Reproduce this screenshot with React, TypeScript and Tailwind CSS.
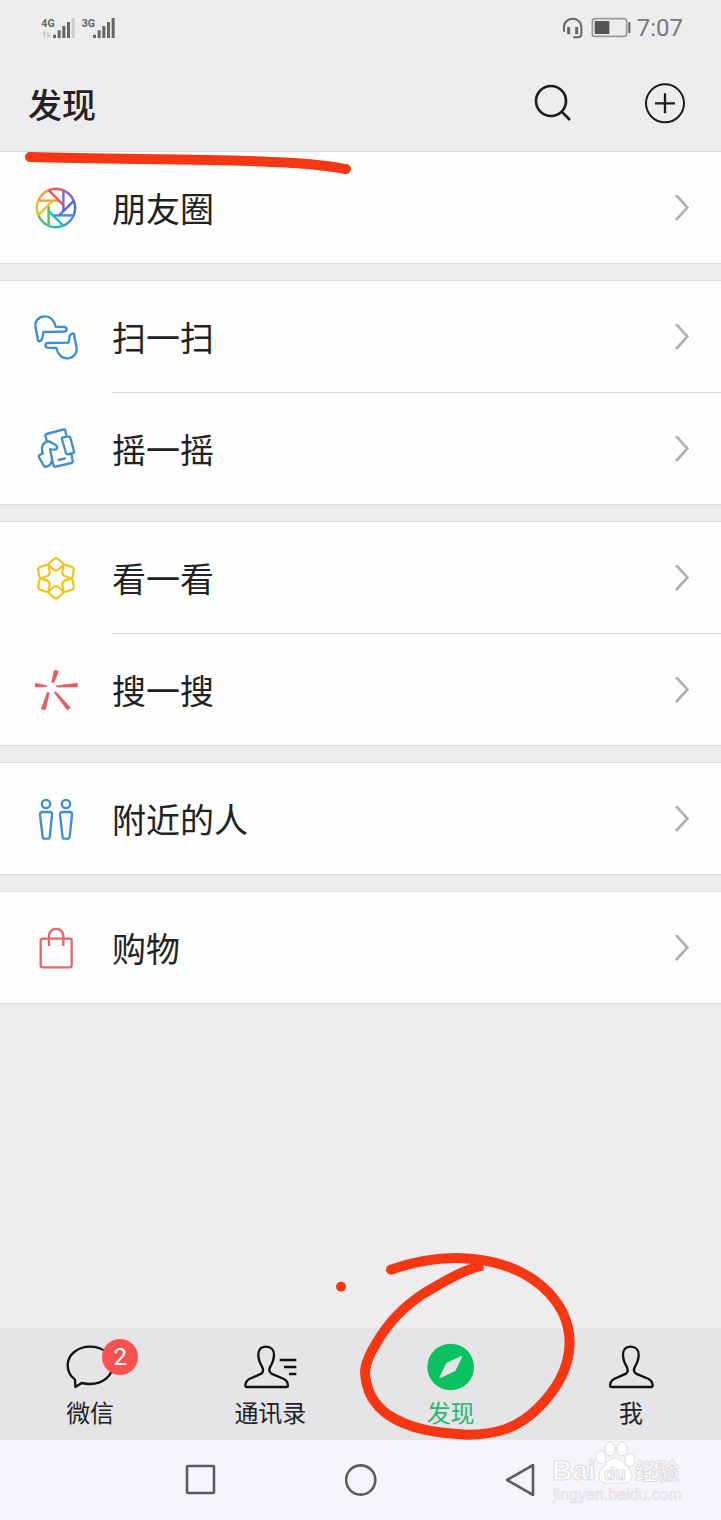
import type { ReactNode } from 'react'

type Item = { label: string; icon: ReactNode }

const BLADES = ['#f5a03c', '#e8584f', '#8a63d2', '#4a6fdc', '#3d8fdd', '#2fb9b5', '#4cc764', '#e3c52f']

function MomentsIcon() {
  return (
    <svg className="size-12 shrink-0" viewBox="-24 -24 48 48" fill="none" strokeWidth="2.4">
      {BLADES.map((color, i) => (
        <g key={color} stroke={color} transform={`rotate(${i * 45})`}>
          <path d="M-17.6 -7.4 H3.2" />
          <path d="M-17.6 -7.4 A19.1 19.1 0 0 1 -7 -17.8" />
        </g>
      ))}
    </svg>
  )
}

function ScanIcon() {
  const hand =
    'M57 123 Q52 123 53 112 L47 85 C42 60 58 48 75 48 C92 48 102 60 107 79 L133 80 Q140 81 140 87 Q140 94 132 94 L70 95 L67 114 Q65 122 57 123 Z'
  return (
    <svg className="size-12 shrink-0" viewBox="36 38 144 144" fill="none" stroke="#3e8ed0" strokeWidth="7" strokeLinejoin="round">
      <path d={hand} />
      <path d={hand} transform="rotate(180 108 111)" />
    </svg>
  )
}

function ShakeIcon() {
  return (
    <svg className="size-12 shrink-0" viewBox="36 374 144 144" fill="none" stroke="#3e8ed0" strokeWidth="7" strokeLinejoin="round" strokeLinecap="round">
      <path d="M80 421 L76 406 Q76 402 80 401 L131 387 Q135 386 136 390 L139 407" />
      <path d="M127 412 L146 408 Q150 408 151 412 L162 453 Q163 457 159 458 L143 462 Q139 462 138 458 L126 417 Q125 413 127 412 Z" />
      <path d="M68 459 C62 437 70 423 87 423 L108 435 Q114 441 110 446 Q102 450 90 446 L100 494 Q101 500 107 499 L154 488 Q159 486 158 481 L154 462" />
      <path d="M68 459 L59 464 Q55 467 57 471 L72 497 Q75 501 79 499 L88 495 Q95 490 96 478" />
      <path d="M116 479 L135 474" />
    </svg>
  )
}

function LookIcon() {
  return (
    <svg className="size-12 shrink-0" viewBox="-72 -73 144 144" fill="none" stroke="#f2c31b" strokeWidth="6.5" strokeLinejoin="round">
      {[0, 60, 120, 180, 240, 300].map((deg) => (
        <path
          key={deg}
          transform={`rotate(${deg})`}
          d="M-6 -58 Q0 -63 6 -58 L20 -46 Q24 -42 21 -38 L7 -26 Q0 -21 -7 -26 L-21 -38 Q-24 -42 -20 -46 Z"
        />
      ))}
    </svg>
  )
}

function SearchStarIcon() {
  return (
    <svg className="size-12 shrink-0" viewBox="36 378 144 144" fill="#e35d62" stroke="#e35d62" strokeWidth="2" strokeLinejoin="round">
      <path d="M103 391 L115 394 L103 426 L95 427 Z" />
      <path d="M46 430 L80 437 L80 440 L46 441 Z" />
      <path d="M110 437 L172 430 L172 441 L110 441 Z" />
      <path d="M82 457 L88 459 L76 510 L64 507 Z" />
      <path d="M103 458 L108 455 L151 503 L142 510 Z" />
    </svg>
  )
}

function NearbyIcon() {
  return (
    <svg className="size-12 shrink-0" viewBox="36 45 144 144" fill="none" stroke="#3e8ed0" strokeWidth="7" strokeLinejoin="round">
      {[0, 60].map((dx) => (
        <g key={dx} transform={`translate(${dx} 0)`}>
          <circle cx="78" cy="72" r="12.5" />
          <path d="M66 96 H91 Q97 97 96 104 L89 172 Q88 176 85 176 H71 Q68 176 68 172 L60 104 Q60 97 66 96 Z" />
        </g>
      ))}
    </svg>
  )
}

function BagIcon() {
  return (
    <svg className="size-12 shrink-0" viewBox="36 432 144 144" fill="none" stroke="#e06a6a" strokeWidth="7">
      <rect x="62" y="476" width="93" height="86" rx="6" />
      <path d="M87 498 V468 A21.5 21.5 0 0 1 130 468 V498" />
    </svg>
  )
}

const GROUPS: Item[][] = [
  [{ label: '朋友圈', icon: <MomentsIcon /> }],
  [
    { label: '扫一扫', icon: <ScanIcon /> },
    { label: '摇一摇', icon: <ShakeIcon /> },
  ],
  [
    { label: '看一看', icon: <LookIcon /> },
    { label: '搜一搜', icon: <SearchStarIcon /> },
  ],
  [{ label: '附近的人', icon: <NearbyIcon /> }],
  [{ label: '购物', icon: <BagIcon /> }],
]

function StatusBar() {
  return (
    <div className="flex h-14 items-center justify-between pr-[38px] pl-10">
      <svg className="h-6 w-20" viewBox="120 45 240 72" fill="#666">
        <text x="124" y="77" fontSize="32" fontWeight="700" fontFamily="Roboto, sans-serif">
          4G
        </text>
        <text x="245" y="77" fontSize="32" fontWeight="700" fontFamily="Roboto, sans-serif">
          3G
        </text>
        <path d="M134 109 V93 L127 99 M144 92 V108 L151 102" stroke="#c4c4c6" strokeWidth="4" fill="none" />
        <path d="M159 101h9v10h-9z M173 88h9v23h-9z M187 75h9v36h-9z M201 63h9v48h-9z" />
        <path d="M215 51h9v60h-9z" fill="#ccc" />
        <path d="M279 101h9v10h-9z M293 88h9v23h-9z M307 75h9v36h-9z M321 63h9v48h-9z M335 51h9v60h-9z" />
      </svg>
      <div className="flex items-center gap-px">
        <svg className="h-6 w-[74px]" viewBox="186 48 222 72" fill="none" stroke="#666">
          <path d="M192 95 V82 C192 48 244 48 244 82 V102 Q244 112 234 112 H220" strokeWidth="6" />
          <path d="M206 81 V103 M230 81 V103" strokeWidth="9" />
          <rect x="277" y="56" width="103" height="53" rx="8" strokeWidth="5" stroke="#999" />
          <rect x="284" y="63" width="44" height="39" fill="#555" stroke="none" />
          <path d="M388 66 V99" strokeWidth="6" />
        </svg>
        <span className="font-[Roboto,sans-serif] text-2xl text-[#777]">7:07</span>
      </div>
    </div>
  )
}

function Header() {
  return (
    <header className="relative border-b border-[#d4d3d6]">
      <StatusBar />
      <div className="flex h-[95px] items-center justify-between pr-8 pl-7">
        <h1 className="text-[34px] leading-10 font-medium">发现</h1>
        <div className="flex gap-16">
          <button type="button" aria-label="搜索">
            <svg className="size-12" viewBox="86 239 144 144" fill="none" stroke="#1c1c1e" strokeWidth="8">
              <circle cx="152" cy="302" r="45" />
              <path d="M184 334 L209 359" />
            </svg>
          </button>
          <button type="button" aria-label="添加">
            <svg className="size-12" viewBox="423 239 144 144" fill="none" stroke="#1c1c1e" strokeWidth="6">
              <circle cx="495" cy="309" r="57" />
              <path d="M465 309 H525 M495 279 V339" strokeWidth="7" />
            </svg>
          </button>
        </div>
      </div>
      {/* red pen underline */}
      <svg className="pointer-events-none absolute top-[144px] left-5 z-10 h-8 w-[340px]" viewBox="20 144 340 32" fill="none">
        <path d="M30 157 C110 159 190 159 250 161 S320 165 346 169" stroke="#f73713" strokeWidth="10" strokeLinecap="round" />
      </svg>
    </header>
  )
}

function Row({ item, divided }: { item: Item; divided: boolean }) {
  return (
    <li>
      {divided && <div className="ml-28 h-px bg-[#d9d9db]" />}
      <button type="button" className="flex h-[111px] w-full items-center gap-8 pr-8 pl-8 text-left">
        {item.icon}
        <span className="flex-1 text-[34px] leading-10">{item.label}</span>
        <svg className="h-[26px] w-[14px]" viewBox="0 0 14 26" fill="none" stroke="#b0b0b2" strokeWidth="2.6">
          <path d="M1 0 L12.5 12.5 L1 25" />
        </svg>
      </button>
    </li>
  )
}

const PERSON =
  'M120 80 C104 80 97 91 97 104 C97 118 101 128 108 140 C113 149 113 155 106 161 L70 177 C61 182 58 188 58 198 Q58 201 62 201 H182 Q186 201 186 198 C186 188 183 182 174 177 L136 161 C128 155 128 149 133 140 C140 128 144 118 144 104 C144 91 136 80 120 80 Z'

function Tab({ label, active, children }: { label: string; active?: boolean; children: ReactNode }) {
  return (
    <a href="#" className={`flex flex-1 flex-col items-center pt-[11px] ${active ? 'text-[#2bb673]' : 'text-[#222]'}`}>
      <span className="relative">{children}</span>
      <span className="text-2xl leading-[34px]">{label}</span>
    </a>
  )
}

function TabBar() {
  return (
    <nav className="flex h-28 bg-[#e5e4e6]">
      <Tab label="微信">
        <svg className="size-14" viewBox="96 57 168 168" fill="none" stroke="#111" strokeWidth="7" strokeLinejoin="round">
          <path d="M136 201 L135 179 C120 168 113 152 113 136 C113 104 143 80 180 80 C218 80 248 104 248 136 C248 168 218 192 180 192 C171 192 163 191 155 189 Z" />
        </svg>
        <span className="absolute top-0 left-10 flex size-9 items-center justify-center rounded-full bg-[#fa5151] font-[Roboto,sans-serif] text-2xl text-white">
          2
        </span>
      </Tab>
      <Tab label="通讯录">
        <svg className="size-14" viewBox="636 57 168 168" fill="none" stroke="#111" strokeWidth="7">
          <path d={PERSON} transform="translate(588 0)" />
          <path d="M749 120 H799 M762 141 H799 M777 162 H799" strokeWidth="8" />
        </svg>
      </Tab>
      <div className="relative flex flex-1">
        <Tab label="发现" active>
          <svg className="size-14" viewBox="308 297 168 168">
            <circle cx="391" cy="381" r="70" fill="#0ac15f" />
            <path d="M422 348 Q427 347 425 352 L405 393 L362 413 Q357 415 358 410 L378 369 Z" fill="#e5e4e6" />
          </svg>
        </Tab>
        {/* red pen circle around the tab */}
        <svg
          className="pointer-events-none absolute -top-22 -left-10 z-10 h-[210px] w-[270px] max-w-none"
          viewBox="3 0 810 630"
          fill="none"
          stroke="#f73713"
          strokeWidth="30"
        >
          <circle cx="63" cy="140" r="15" fill="#f73713" stroke="none" />
          <circle cx="213" cy="89" r="15" fill="#f73713" stroke="none" />
          <path d="M213 89 C290 62 350 54 410 54 C520 56 600 82 665 138 C725 190 749 250 749 310 C747 390 705 455 650 508 C590 565 530 584 440 584 C350 580 270 568 205 525 C155 490 137 445 135 395 C137 365 150 340 170 308 C205 247 250 200 315 158 C375 123 440 84 490 77" />
        </svg>
      </div>
      <Tab label="我">
        <svg className="size-14" viewBox="36 57 168 168" fill="none" stroke="#111" strokeWidth="7">
          <path d={PERSON} transform="translate(-1 0)" />
        </svg>
      </Tab>
    </nav>
  )
}

function SystemNav() {
  return (
    <div className="relative flex h-20 items-center justify-center gap-32 bg-[#f7f5f9]">
      <button type="button" aria-label="最近任务">
        <svg className="size-8" viewBox="0 0 32 32" fill="none" stroke="#5c5c5e" strokeWidth="2.6">
          <rect x="2" y="2" width="27" height="27" rx="1" />
        </svg>
      </button>
      <button type="button" aria-label="主屏幕">
        <svg className="size-8" viewBox="0 0 32 32" fill="none" stroke="#5c5c5e" strokeWidth="2.6">
          <circle cx="15.7" cy="16" r="14.6" />
        </svg>
      </button>
      <button type="button" aria-label="返回">
        <svg className="size-8" viewBox="0 0 32 32" fill="none" stroke="#5c5c5e" strokeWidth="2.6" strokeLinejoin="round">
          <path d="M2 16 L28 1 V31 Z" />
        </svg>
      </button>
      <svg
        className="absolute top-0 right-9 h-[70px] w-[136px]"
        viewBox="549 1440 136 70"
        fill="#fff"
        stroke="#dcdade"
        strokeWidth="1"
        fontFamily="'Liberation Sans', 'Noto Sans CJK SC', sans-serif"
      >
        <text x="552" y="1480" fontSize="28" fontWeight="700">Bai</text>
        <ellipse cx="601" cy="1457" rx="5" ry="6.5" />
        <ellipse cx="610" cy="1449" rx="5" ry="7" />
        <ellipse cx="622" cy="1449" rx="5" ry="7" />
        <ellipse cx="630" cy="1460" rx="5" ry="6.5" />
        <path d="M615 1458 C622 1458 625 1465 630 1470 C634 1475 632 1483 625 1483 C619 1483 611 1483 606 1483 C598 1483 597 1475 601 1470 C606 1465 608 1458 615 1458 Z" />
        <text x="604" y="1480" fontSize="18" fontWeight="700">du</text>
        <text x="635" y="1479" fontSize="22" fontWeight="700">经验</text>
        <text x="553" y="1500" fontSize="16" fill="#f4f2f6" strokeWidth="0.5">jingyan.baidu.com</text>
      </svg>
    </div>
  )
}

export default function App() {
  return (
    <div className="flex min-h-screen flex-col overflow-x-hidden bg-[#eeecef] font-['Noto_Sans_CJK_SC',sans-serif] text-[#222]">
      <Header />
      <main className="flex flex-1 flex-col gap-4">
        {GROUPS.map((group, i) => (
          <ul key={i} className={`border-b border-[#dddcdf] bg-[#fefefe] ${i > 0 ? 'border-t' : ''}`}>
            {group.map((item, j) => (
              <Row key={item.label} item={item} divided={j > 0} />
            ))}
          </ul>
        ))}
      </main>
      <TabBar />
      <SystemNav />
    </div>
  )
}
